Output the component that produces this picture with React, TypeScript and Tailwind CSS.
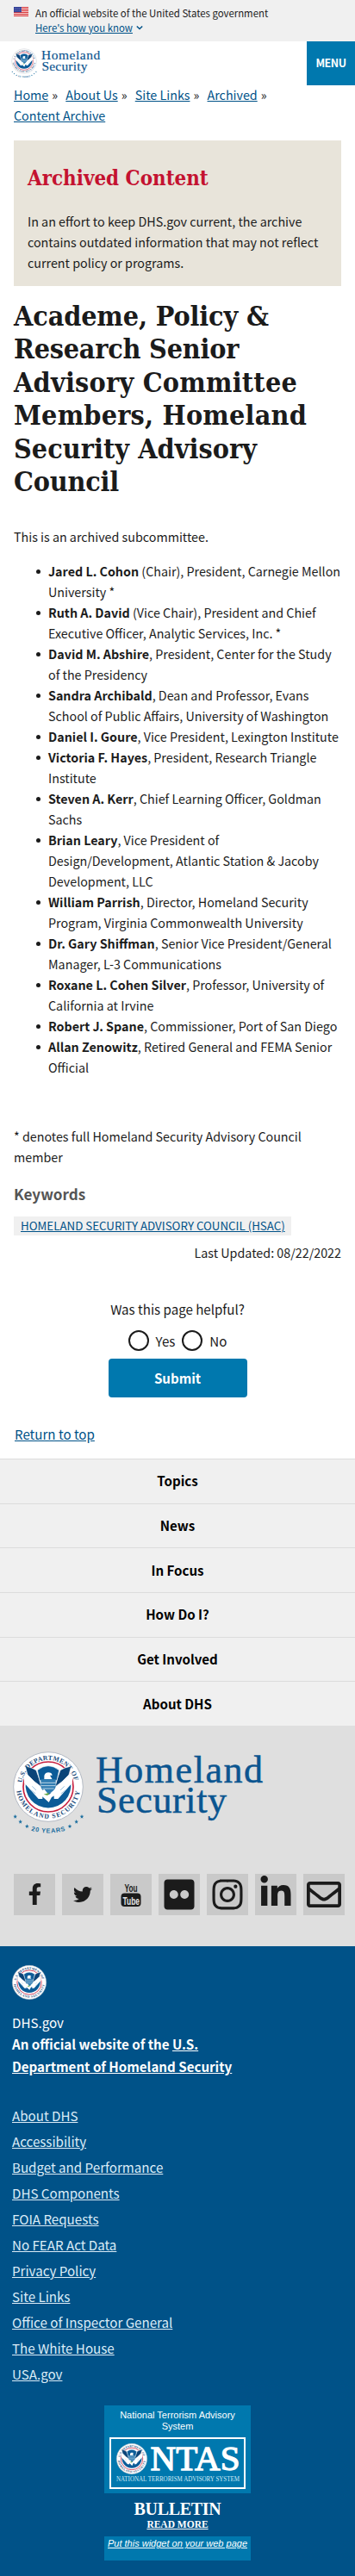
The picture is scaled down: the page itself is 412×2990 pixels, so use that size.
import type { ReactNode } from "react";
import {
  FaFacebookF,
  FaTwitter,
  FaFlickr,
  FaInstagram,
  FaLinkedinIn,
  FaRegEnvelope,
} from "react-icons/fa";

function Seal({ className, years = false, id }: { className: string; years?: boolean; id: string }) {
  return (
    <svg className={`overflow-visible ${className}`} viewBox={years ? "-126 -126 252 294" : "-123 -123 246 246"} aria-hidden="true">
      <circle r="121" fill="#fff" stroke="#b4bac4" strokeWidth="3" />
      <circle r="87" fill="none" stroke="#c8203f" strokeWidth="5" />
      <path d="M-78 -18A79 79 0 1 0 78 -18L40 20L-40 20Z" fill="#0c5c98" />
      <path d="M-84 -38L-66 -58L-20 -16V42H-34L-84 -14Z" fill="#fff" />
      <path d="M84 -38L66 -58L20 -16V42H34L84 -14Z" fill="#fff" />
      <path d="M-80 -72L-58 -66L-42 -58L-32 -30L-24 0L-48 -18L-72 -42Z" fill="#0b4478" stroke="#fff" strokeWidth="2" />
      <path d="M80 -72L58 -66L42 -58L32 -30L24 0L48 -18L72 -42Z" fill="#0b4478" stroke="#fff" strokeWidth="2" />
      <path d="M-38 -58Q0 -88 38 -58L30 -22H-30Z" fill="#0c5c98" stroke="#fff" strokeWidth="2" />
      <path d="M-14 -30Q-16 -50 0 -50Q12 -50 14 -40L6 -40L14 -26H-14Z" fill="#fff" />
      <path d="M-26 -26H26V0Q20 18 0 24Q-20 18 -26 0Z" fill="#2f7cb2" />
      <path d="M-26 -14H26M-25 -4H25M-20 6H20" stroke="#fff" strokeWidth="2" fill="none" />
      <path d="M-34 22L-14 8L2 28L22 10L34 24L12 36L2 54L-14 40Z" fill="#fff" />
      <path d="M-16 26L4 20L-2 30Z" fill="#63a844" />
      <path d="M-62 10L-44 24M62 10L44 24M-56 -2L-42 12M56 -2L42 12" stroke="#9cc4e0" strokeWidth="3" />
      <path id={`${id}-top`} d="M-92 -14A93 93 0 0 1 92 -14" fill="none" />
      <path id={`${id}-bottom`} d="M-110 14A111 111 0 0 0 110 14" fill="none" />
      <g fill="#17497a" fontFamily="'Liberation Serif', serif" fontWeight="bold" fontSize="23">
        <text textLength="258" lengthAdjust="spacing">
          <textPath href={`#${id}-top`}>U.S. DEPARTMENT OF</textPath>
        </text>
        <text textLength="316" lengthAdjust="spacing">
          <textPath href={`#${id}-bottom`}>HOMELAND SECURITY</textPath>
        </text>
      </g>
      {years && (
        <g fill="#1d6f9f">
          <path id={`${id}-years`} d="M-60 152A220 220 0 0 0 64 151" fill="none" />
          <text fontFamily="'Liberation Sans', sans-serif" fontWeight="bold" fontSize="22" textLength="121">
            <textPath href={`#${id}-years`}>20 YEARS</textPath>
          </text>
          {[-115, -97, -74, 75, 98, 117].map((x, i) => (
            <path
              key={x}
              transform={`translate(${x} ${[103, 121, 137, 137, 121, 103][i]})`}
              d="M0 -7L2 -2L7 -2L3 2L4 7L0 4L-4 7L-3 2L-7 -2L-2 -2Z"
            />
          ))}
        </g>
      )}
    </svg>
  );
}

function Wordmark({ className }: { className: string }) {
  return (
    <svg className={`overflow-visible ${className}`} viewBox="0 0 196 82" aria-label="Homeland Security">
      <g fill="#0b5590" stroke="#0b5590" strokeWidth=".5" fontFamily="'Liberation Serif', serif" fontSize="44">
        <text x="0" y="32.5" textLength="194" lengthAdjust="spacing">Homeland</text>
        <text x="1" y="68" textLength="151" lengthAdjust="spacing">Security</text>
      </g>
    </svg>
  );
}

function Flag() {
  return (
    <svg className="mt-2 h-[11px] w-[17px] shrink-0" viewBox="0 0 17 11" aria-hidden="true">
      <path d="M0 0H17V11H0Z" fill="#fff" />
      <path d="M0 .6H17M0 2.6H17M0 4.6H17M0 6.6H17M0 8.5H17M0 10.4H17" stroke="#d8393c" strokeWidth="1.1" />
      <path d="M0 0H9V6.2H0Z" fill="#2b3a94" />
      <path d="M1 1.4H9M1 3.1H9M1 4.8H9" stroke="#aab2e0" strokeWidth=".7" strokeDasharray=".8 1" />
    </svg>
  );
}

function YouTubeMark() {
  return (
    <svg className="h-[28px] w-[24px] overflow-visible" viewBox="0 0 24 28" aria-hidden="true">
      <rect x=".5" y="12.5" width="23" height="15.5" rx="4" fill="#1b1b1b" />
      <g fontFamily="'Liberation Sans Narrow', 'Liberation Sans', sans-serif" fontWeight="bold">
        <text x="4.5" y="11" fontSize="13.5" textLength="15" lengthAdjust="spacingAndGlyphs" fill="#1b1b1b">You</text>
        <text x="2.5" y="25.5" fontSize="13" textLength="19.5" lengthAdjust="spacingAndGlyphs" fill="#e4e4e4">Tube</text>
      </g>
    </svg>
  );
}

const crumbs = ["Home", "About Us", "Site Links", "Archived"];

const members: [string, string[]][] = [
  ["Jared L. Cohon", [" (Chair), President, Carnegie Mellon", "University *"]],
  ["Ruth A. David", [" (Vice Chair), President and Chief", "Executive Officer, Analytic Services, Inc. *"]],
  ["David M. Abshire", [", President, Center for the Study", "of the Presidency"]],
  ["Sandra Archibald", [", Dean and Professor, Evans", "School of Public Affairs, University of Washington"]],
  ["Daniel I. Goure", [", Vice President, Lexington Institute"]],
  ["Victoria F. Hayes", [", President, Research Triangle", "Institute"]],
  ["Steven A. Kerr", [", Chief Learning Officer, Goldman", "Sachs"]],
  ["Brian Leary", [", Vice President of", "Design/Development, Atlantic Station & Jacoby", "Development, LLC"]],
  ["William Parrish", [", Director, Homeland Security", "Program, Virginia Commonwealth University"]],
  ["Dr. Gary Shiffman", [", Senior Vice President/General", "Manager, L-3 Communications"]],
  ["Roxane L. Cohen Silver", [", Professor, University of", "California at Irvine"]],
  ["Robert J. Spane", [", Commissioner, Port of San Diego"]],
  ["Allan Zenowitz", [", Retired General and FEMA Senior", "Official"]],
];

const sections = ["Topics", "News", "In Focus", "How Do I?", "Get Involved", "About DHS"];

const footerLinks = [
  "About DHS",
  "Accessibility",
  "Budget and Performance",
  "DHS Components",
  "FOIA Requests",
  "No FEAR Act Data",
  "Privacy Policy",
  "Site Links",
  "Office of Inspector General",
  "The White House",
  "USA.gov",
];

const titleLines: [string, string][] = [
  ["Academe, Policy &", "tracking-[-0.12px]"],
  ["Research Senior", "tracking-[-0.22px]"],
  ["Advisory Committee", "tracking-[0.24px]"],
  ["Members, Homeland", "tracking-[0.22px]"],
  ["Security Advisory", "tracking-[0.05px]"],
  ["Council", "tracking-[-0.2px]"],
];

function Tile({ children }: { children: ReactNode }) {
  return <a className="flex size-12 shrink-0 items-center justify-center bg-[#c9c9c9]">{children}</a>;
}

export default function App() {
  return (
    <div className="w-[412px] overflow-hidden bg-white font-['Noto_Sans_CJK_SC',sans-serif] text-[14.3px] leading-6 text-[#1b1b1b]">
      <div className="flex h-12 gap-2 bg-[#f0f0f0] pl-4 text-[11.4px] leading-4">
        <Flag />
        <div className="pt-[7px] whitespace-nowrap">
          <p>An official website of the United States government</p>
          <p className="flex items-center pt-px text-[#005288]">
            <span className="underline">Here's how you know</span>
            <svg className="ml-1 h-2 w-2" viewBox="0 0 8 8" fill="none" stroke="#005288" strokeWidth="1.5">
              <path d="M.8 2.5L4 5.5L7.2 2.5" />
            </svg>
          </p>
        </div>
      </div>

      <header className="flex h-[50px] items-start pl-[13px]">
        <Seal id="head" years className="mt-2 h-[35px] w-[30px]" />
        <Wordmark className="mt-[10px] ml-[5px] h-[28.8px] w-[69px]" />
        <button className="ml-auto h-[50.5px] w-14 bg-[#0078ae] text-[12.5px] font-bold tracking-[-0.5px] text-white">
          MENU
        </button>
      </header>

      <nav className="h-[65px] px-4">
        <ol className="flex flex-wrap">
          {crumbs.map((c) => (
            <li key={c} className="mr-[9.2px]">
              <a className="mr-1 text-[#005288] underline">{c}</a>»
            </li>
          ))}
          <li>
            <a className="text-[#005288] underline">Content Archive</a>
          </li>
        </ol>
      </nav>

      <main className="px-4">
        <section className="h-[169px] bg-[#e8e4da] px-4 pt-[30px] whitespace-nowrap">
          <h2 className="font-['DejaVu_Serif_Condensed','DejaVu_Serif',serif] text-[23.9px] leading-7 font-bold text-[#c41230]">
            Archived Content
          </h2>
          <p className="pt-6">
            In an effort to keep DHS.gov current, the archive
            <br />
            contains outdated information that may not reflect
            <br />
            current policy or programs.
          </p>
        </section>

        <h1 className="pt-4 font-['DejaVu_Serif_Condensed','DejaVu_Serif',serif] text-[32px] leading-[38.4px] font-bold whitespace-nowrap">
          {titleLines.map(([line, tracking]) => (
            <span key={line} className={`block ${tracking}`}>
              {line}
            </span>
          ))}
        </h1>

        <p className="pt-[32.6px]">This is an archived subcommittee.</p>

        <ul className="list-none pt-4 pl-10 whitespace-nowrap">
          {members.map(([name, rest]) => (
            <li key={name} className="relative">
              <span className="absolute top-[10px] -left-[14px] size-[5px] rounded-full bg-[#1b1b1b]" />
              <b>{name}</b>
              {rest.map((line, i) => (
                <span key={line}>
                  {i > 0 && <br />}
                  {line}
                </span>
              ))}
            </li>
          ))}
        </ul>

        <p className="pt-14">
          * denotes full Homeland Security Advisory Council
          <br />
          member
        </p>
        <h3 className="pt-[19px] text-[17.1px] leading-6 font-bold text-[#555]">Keywords</h3>
        <div className="mt-[14px] h-[22px] w-[322px] bg-[#f0f0f0] pl-2 text-[13.3px] leading-[22px] whitespace-nowrap text-[#005288] underline">
          HOMELAND SECURITY ADVISORY COUNCIL (HSAC)
        </div>
        <p className="pt-2 text-right">Last Updated: 08/22/2022</p>

        <form className="flex flex-col items-center pt-[41px] text-[15.1px]">
          <p>Was this page helpful?</p>
          <div className="flex h-[50px] items-center">
            <span className="size-6 rounded-full border-2 border-[#1b1b1b]" />
            <span className="ml-2">Yes</span>
            <span className="ml-2 size-6 rounded-full border-2 border-[#1b1b1b]" />
            <span className="ml-2">No</span>
          </div>
          <button type="button" className="-mt-1 h-[44.5px] w-[161px] rounded bg-[#0078ae] font-bold text-white">
            Submit
          </button>
        </form>
        <a className="block pt-[30.5px] pl-px text-[15.1px] text-[#005288] underline">Return to top</a>
      </main>

      <nav className="pt-[17px] text-[15.1px]">
        {sections.map((s) => (
          <a
            key={s}
            className="flex h-[51.67px] items-center justify-center border-t border-[#dcdcdc] bg-[#f0f0f0] pb-0.5 font-bold text-black"
          >
            {s}
          </a>
        ))}
      </nav>

      <section className="h-64 bg-[#dfdfdf] pt-[29px] pl-4">
        <div className="flex items-start">
          <Seal id="foot" years className="-ml-[2px] h-[98px] w-[84px]" />
          <Wordmark className="mt-[4px] ml-[13px] h-[82px] w-[196px]" />
        </div>
        <div className="mt-[45px] flex gap-2 text-[#1b1b1b]">
          <Tile>
            <FaFacebookF size={25} />
          </Tile>
          <Tile>
            <FaTwitter size={22} />
          </Tile>
          <Tile>
            <YouTubeMark />
          </Tile>
          <Tile>
            <FaFlickr size={40} />
          </Tile>
          <Tile>
            <FaInstagram size={40} />
          </Tile>
          <Tile>
            <FaLinkedinIn size={40} className="mb-1" />
          </Tile>
          <Tile>
            <FaRegEnvelope size={40} />
          </Tile>
        </div>
      </section>

      <footer className="h-[731px] bg-[#005288] pt-[22px] pl-[14px] text-[15.14px] text-white">
        <Seal id="low" className="size-10" />
        <p className="pt-[14px]">DHS.gov</p>
        <p className="pt-[1.4px] leading-[25.4px] font-bold">
          An official website of the <span className="underline">U.S.</span>
          <br />
          <span className="underline">Department of Homeland Security</span>
        </p>
        <ul className="pt-[29px] leading-[30px] text-[#dcecf7] underline">
          {footerLinks.map((l) => (
            <li key={l}>{l}</li>
          ))}
        </ul>
        <div className="mt-[22px] ml-[107px] w-[170px] text-center font-['Liberation_Sans',sans-serif] text-[11px]">
          <div className="h-[102px] bg-[#0078ae] pt-[5px] leading-[13px]">
            National Terrorism Advisory
            <br />
            System
            <div className="mt-[6px] ml-[6px] flex h-[60px] w-[158px] flex-col border-2 border-white">
              <div className="flex pt-[5px] pl-[6px]">
                <Seal id="ntas" className="size-9" />
                <svg className="h-9 w-[108px] overflow-visible" viewBox="0 0 108 36" aria-label="NTAS">
                  <text x="3.5" y="31" textLength="104" lengthAdjust="spacing" fontSize="41" fontFamily="'Liberation Serif', serif" fill="#fff" stroke="#fff" strokeWidth="1.3">NTAS</text>
                </svg>
              </div>
              <svg className="ml-[6px] h-[10px] w-[143px] overflow-visible" viewBox="0 0 143 10" aria-hidden="true">
                <text x="0" y="8" textLength="143" lengthAdjust="spacingAndGlyphs" fontSize="8" fontFamily="'Liberation Serif', serif" fill="#cfe8f5">NATIONAL TERRORISM ADVISORY SYSTEM</text>
              </svg>
            </div>
          </div>
          <div className="flex h-[50px] flex-col items-center pt-[7px] font-['Liberation_Serif',serif] font-bold">
            <span className="text-[20px] leading-[22px] tracking-[-0.3px]">BULLETIN</span>
            <span className="text-[11.5px] leading-[14px] underline">READ MORE</span>
          </div>
          <div className="h-7 bg-[#0078ae] pt-0.5 leading-[13px] whitespace-nowrap italic underline">
            Put this widget on your web page
          </div>
        </div>
      </footer>
    </div>
  );
}
